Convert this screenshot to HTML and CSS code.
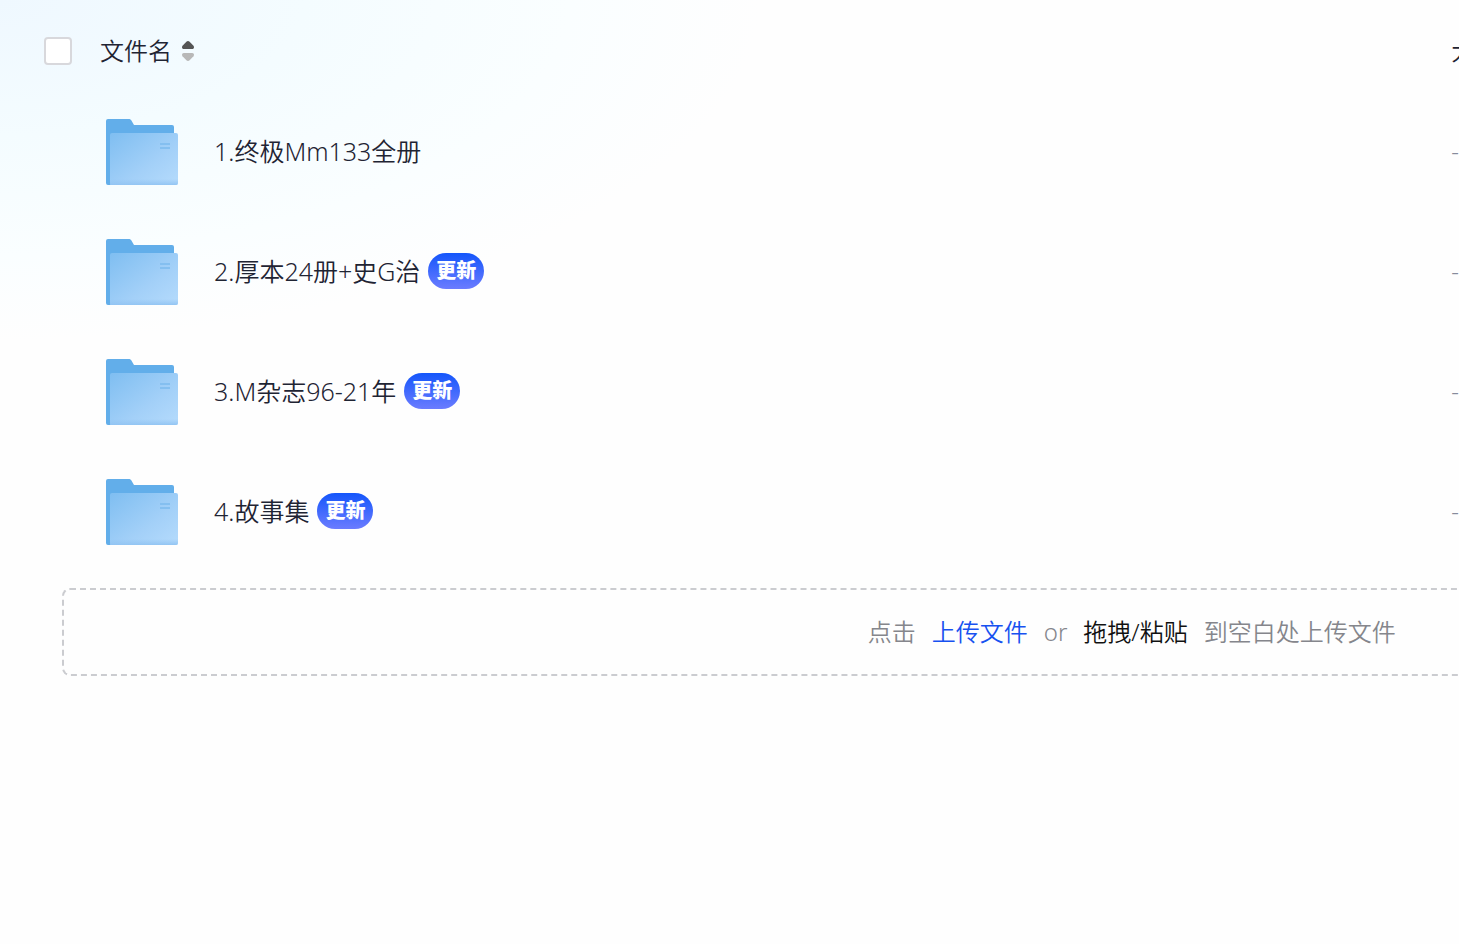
FILE: index.html
```html
<!DOCTYPE html>
<html lang="zh-CN">
  <head>
    <meta charset="utf-8" />
    <title>文件</title>
    <link rel="stylesheet" href="styles.css">
  </head>
  <body>
    <!-- shared folder icon -->
    <svg class="sprite" aria-hidden="true">
      <defs>
        <linearGradient id="folder-front" x1="0" y1="0" x2="1" y2="1">
          <stop offset="0" stop-color="#7fbef1"/>
          <stop offset="0.6" stop-color="#a3d0f8"/>
          <stop offset="1" stop-color="#b5dbfc"/>
        </linearGradient>
        <linearGradient id="folder-shade" x1="0" y1="0" x2="0" y2="1">
          <stop offset="0" stop-color="#93c5f3" stop-opacity="0"/>
          <stop offset="1" stop-color="#93c5f3"/>
        </linearGradient>
      </defs>
      <symbol id="folder" viewBox="0 0 72 66">
        <path fill="#62aeea" d="M2 0h20.500c1.500 0 2.500.6 3.200 1.900L28 6h38a2 2 0 0 1 2 2v14L20 66H2a2 2 0 0 1-2-2V2a2 2 0 0 1 2-2z"/>
        <rect x="4" y="14" width="68" height="52" rx="2" fill="url(#folder-front)"/>
        <path fill="url(#folder-shade)" d="M4 60h68v4a2 2 0 0 1-2 2H4z"/>
        <path fill="#84bff0" d="M54 24h10v2H54zM54 28h10v2H54z"/>
      </symbol>
    </svg>
    <main class="files">
      <table class="fileTable">
        <thead>
          <tr>
            <th class="fileTable__name">
              <div class="fileTable__head">
                <input class="fileTable__check" type="checkbox" aria-label="全选">
                <button class="fileTable__sort" type="button">文件名
                  <svg class="fileTable__sortIcon" width="12" height="20" viewBox="0 0 12 20">
                    <path fill="#555" d="M6 0c.6 0 1.100.2 1.600.7l3.900 4.100c1 1.200.4 3.200-1.300 3.200H1.800C.1 8-.5 6 .5 4.800L4.400.7C4.900.2 5.400 0 6 0z"/>
                    <path fill="#b8b8b8" d="M6 20c.6 0 1.100-.2 1.600-.7l3.900-4.100c1-1.200.4-3.200-1.300-3.200H1.800C.1 12-.5 14 .5 15.200l3.900 4.100c.5.5 1 .7 1.600.7z"/>
                  </svg>
                </button>
              </div>
            </th>
            <th class="fileTable__size">大小</th>
          </tr>
        </thead>
        <tbody>
          <tr>
            <td>
              <div class="file">
                <svg class="file__icon"><use href="#folder"/></svg>
                <a class="file__name" href="#">1.终极Mm133全册</a>
              </div>
            </td>
            <td class="fileTable__size">-</td>
          </tr>
          <tr>
            <td>
              <div class="file">
                <svg class="file__icon"><use href="#folder"/></svg>
                <a class="file__name" href="#">2.厚本24册+史G治</a>
                <span class="file__badge">更新</span>
              </div>
            </td>
            <td class="fileTable__size">-</td>
          </tr>
          <tr>
            <td>
              <div class="file">
                <svg class="file__icon"><use href="#folder"/></svg>
                <a class="file__name" href="#">3.M杂志96-21年</a>
                <span class="file__badge">更新</span>
              </div>
            </td>
            <td class="fileTable__size">-</td>
          </tr>
          <tr>
            <td>
              <div class="file">
                <svg class="file__icon"><use href="#folder"/></svg>
                <a class="file__name" href="#">4.故事集</a>
                <span class="file__badge">更新</span>
              </div>
            </td>
            <td class="fileTable__size">-</td>
          </tr>
        </tbody>
      </table>
      <div class="upload">
        <span>点击</span>
        <a class="upload__link" href="#">上传文件</a>
        <span>or</span>
        <span class="upload__strong">拖拽/粘贴</span>
        <span>到空白处上传文件</span>
      </div>
    </main>
  </body>
</html>
```

FILE: styles.css
```css
* {
  box-sizing: border-box;
}

body {
  margin: 0;
  min-height: 100vh;
  overflow: hidden;
  font-family: "Noto Sans", "Noto Sans CJK SC", sans-serif;
  font-size: 24px;
  font-weight: 350;
  line-height: 36px;
  color: #1f2433;
  background: radial-gradient(ellipse 760px 340px at 0 0, #eff8ff 0%, #f4fcff 40%, #fafeff 75%, #fefefe 100%) #fefefe;
}

.sprite {
  position: absolute;
  width: 0;
  height: 0;
}

/* the list is wider than the window and runs off its right side */
.files {
  width: 155vw;
  padding-top: 10px;
}

.fileTable {
  width: 100%;
  table-layout: fixed;
  border-collapse: collapse;
}

.fileTable th,
.fileTable td {
  padding: 0;
  text-align: left;
  font-weight: 350;
}

.fileTable th {
  height: 82px;
}

.fileTable td {
  height: 120px;
}

.fileTable .fileTable__name {
  width: 64%;
}

.fileTable .fileTable__size {
  padding-left: 4px;
}

.fileTable td.fileTable__size {
  padding-bottom: 2px;
  color: #878c9c;
}

.fileTable__head {
  display: flex;
  align-items: center;
  gap: 28px;
  padding-left: 44px;
}

.fileTable__check {
  appearance: none;
  width: 28px;
  height: 28px;
  margin: 0;
  border: 2px solid #d8d8dc;
  border-radius: 4px;
  background-color: #fff;
}

.fileTable__sort {
  display: flex;
  align-items: center;
  gap: 10px;
  padding: 0;
  border: none;
  background: none;
  font: inherit;
  color: inherit;
  cursor: pointer;
}

.file {
  display: flex;
  align-items: center;
  padding-left: 106px;
}

.file__icon {
  width: 72px;
  height: 66px;
  margin-right: 36px;
}

.file__name {
  margin-bottom: 2px;
  font-size: 25px;
  color: inherit;
  text-decoration: none;
}

.file__badge {
  margin: 0 0 2px 8px;
  padding: 0 8px;
  border-radius: 18px;
  font-size: 20px;
  font-weight: 900;
  color: #fff;
  background: linear-gradient(#1456fb, #6b7cff);
}

.upload {
  display: flex;
  align-items: center;
  justify-content: center;
  gap: 16px;
  height: 88px;
  margin: 16px 60px 0 62px;
  border: 2px dashed #cbccd0;
  border-radius: 8px;
  color: #85868c;
}

.upload__link {
  color: #1751f0;
  text-decoration: none;
}

.upload__strong {
  color: #111;
}
```
